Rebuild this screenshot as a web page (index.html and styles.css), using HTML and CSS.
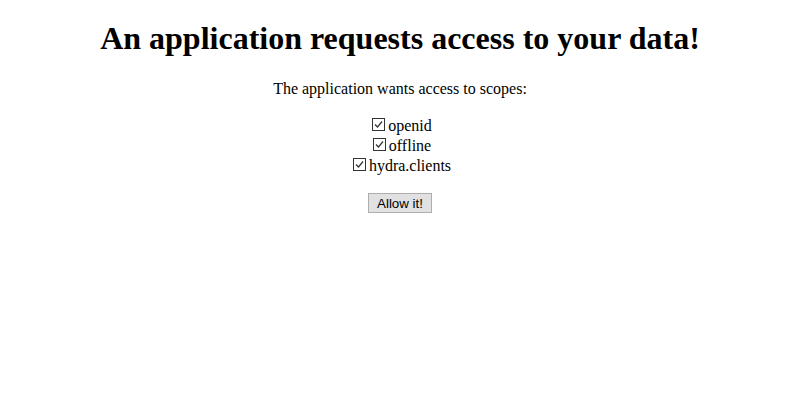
FILE: index.html
```html
<!DOCTYPE html>
<html>
<head>
<meta charset="utf-8">
<link rel="stylesheet" href="styles.css">
</head>
<body>
<div class="page">
  <h1 class="title">An application requests access to your data!</h1>
  <p class="intro">The application wants access to scopes:</p>
  <div class="scopes">
    <label class="scope"><span class="box"><svg width="11" height="11" viewBox="0 0 11 11"><path d="M2 5.5 L4.5 8 L9 2.5" fill="none" stroke="#333" stroke-width="1.2"/></svg></span>openid</label>
    <label class="scope"><span class="box"><svg width="11" height="11" viewBox="0 0 11 11"><path d="M2 5.5 L4.5 8 L9 2.5" fill="none" stroke="#333" stroke-width="1.2"/></svg></span>offline</label>
    <label class="scope"><span class="box"><svg width="11" height="11" viewBox="0 0 11 11"><path d="M2 5.5 L4.5 8 L9 2.5" fill="none" stroke="#333" stroke-width="1.2"/></svg></span>hydra.clients</label>
  </div>
  <div class="actions"><button class="allow" type="button">Allow it!</button></div>
</div>
</body>
</html>
```
FILE: styles.css
```css
html, body { margin: 0; padding: 0; background: #fff; }
.page {
  padding: 8px;
  text-align: center;
  font-family: "Liberation Serif", "Times New Roman", serif;
  color: #000;
  font-size: 16px;
}
.title {
  font-size: 32px;
  font-weight: bold;
  margin: 12px 0 0;
  line-height: 37px;
}
.intro { margin: 23px 0 0; line-height: 18px; }
.scopes {
  margin-top: 18px;
  display: flex;
  flex-direction: column;
  align-items: center;
}
.scope {
  display: flex;
  align-items: center;
  height: 20px;
  line-height: 18px;
}
.box {
  display: inline-block;
  width: 11px;
  height: 11px;
  border: 1px solid #333;
  margin-left: 4px;
  margin-right: 3px;
  position: relative;
  top: -2px;
}
.box svg { display: block; }
.actions { margin-top: 17px; }
.allow {
  font-family: "Liberation Sans", Arial, sans-serif;
  font-size: 13.33px;
  background: #e1e1e1;
  border: 1px solid #adadad;
  padding: 0 8px;
  height: 20px;
  color: #000;
  border-radius: 0;
}
```
